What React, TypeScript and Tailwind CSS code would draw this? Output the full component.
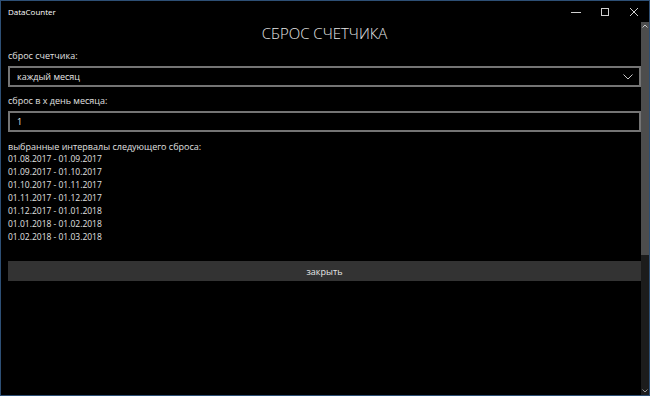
import React from "react";

const dates = [
  "01.08.2017 - 01.09.2017",
  "01.09.2017 - 01.10.2017",
  "01.10.2017 - 01.11.2017",
  "01.11.2017 - 01.12.2017",
  "01.12.2017 - 01.01.2018",
  "01.01.2018 - 01.02.2018",
  "01.02.2018 - 01.03.2018",
];

function TitleBar() {
  return (
    <div className="flex h-[21px] items-center bg-black text-white">
      <span className="pl-[7px] pt-[1px] text-[8px] leading-none">DataCounter</span>
      <div className="ml-auto flex h-full items-center">
        <div className="flex h-full w-[29px] items-center justify-center">
          <svg width="10" height="10" viewBox="0 0 10 10">
            <path d="M0 5.5h10" stroke="#d0d0d0" strokeWidth="1" />
          </svg>
        </div>
        <div className="flex h-full w-[29px] items-center justify-center">
          <svg width="10" height="10" viewBox="0 0 10 10">
            <rect x="1.5" y="1.5" width="7" height="7" fill="none" stroke="#d0d0d0" strokeWidth="1" />
          </svg>
        </div>
        <div className="flex h-full w-[30px] items-center justify-center">
          <svg width="10" height="10" viewBox="0 0 10 10">
            <path d="M1 1l8 8M9 1l-8 8" stroke="#d0d0d0" strokeWidth="1" />
          </svg>
        </div>
      </div>
    </div>
  );
}

function ScrollBar() {
  return (
    <div className="flex w-[8px] flex-col">
      <div className="flex h-[8px] items-center justify-center bg-[#4d4d4d]">
        <svg width="6" height="4" viewBox="0 0 6 4">
          <path d="M0.5 3.5L3 1l2.5 2.5" fill="none" stroke="#c8c8c8" strokeWidth="1" />
        </svg>
      </div>
      <div className="h-[225px] bg-[#4d4d4d]" />
      <div className="flex-1 bg-[#1c1c1c]" />
      <div className="flex h-[8px] items-center justify-center bg-[#1c1c1c]">
        <svg width="6" height="4" viewBox="0 0 6 4">
          <path d="M0.5 0.5L3 3l2.5-2.5" fill="none" stroke="#9a9a9a" strokeWidth="1" />
        </svg>
      </div>
    </div>
  );
}

export default function App() {
  return (
    <div
      className="flex h-[396px] w-[650px] flex-col border border-[#2d4f75] bg-black text-white"
      style={{ fontFamily: '"Open Sans", "Noto Sans", sans-serif' }}
    >
      <TitleBar />
      <div className="flex flex-1">
        <div className="flex flex-1 flex-col pl-[7px]">
          <h1 className="mt-[1px] text-center text-[15px] font-light leading-[20px] text-[#e6e6e6]">
            СБРОС СЧЕТЧИКА
          </h1>

          <label className="mt-[7px] text-[9px] leading-[12px] text-[#e0e0e0]">сброс счетчика:</label>
          <div className="mt-[4px] flex h-[21px] items-center justify-between border-2 border-[#747474] pl-[7px] pr-[6px]">
            <span className="text-[9px] leading-none text-[#e6e6e6]">каждый месяц</span>
            <svg width="10" height="6" viewBox="0 0 10 6">
              <path d="M0.5 0.5L5 5l4.5-4.5" fill="none" stroke="#c8c8c8" strokeWidth="1" />
            </svg>
          </div>

          <label className="mt-[8px] text-[9px] leading-[12px] text-[#e0e0e0]">сброс в х день месяца:</label>
          <div className="mt-[4px] flex h-[21px] items-center border-2 border-[#747474] pl-[7px]">
            <span className="text-[9px] leading-none text-[#e6e6e6]">1</span>
          </div>

          <label className="mt-[9px] text-[9px] leading-[11px] text-[#e0e0e0]">
            выбранные интервалы следующего сброса:
          </label>
          <div className="flex flex-col">
            {dates.map((d) => (
              <span key={d} className="text-[8.5px] leading-[13px] text-[#e0e0e0]">
                {d}
              </span>
            ))}
          </div>

          <button className="mt-[18px] flex h-[20px] items-center justify-center bg-[#333333] text-[9px] leading-none text-[#e6e6e6]">
            закрыть
          </button>
        </div>
        <ScrollBar />
      </div>
    </div>
  );
}
